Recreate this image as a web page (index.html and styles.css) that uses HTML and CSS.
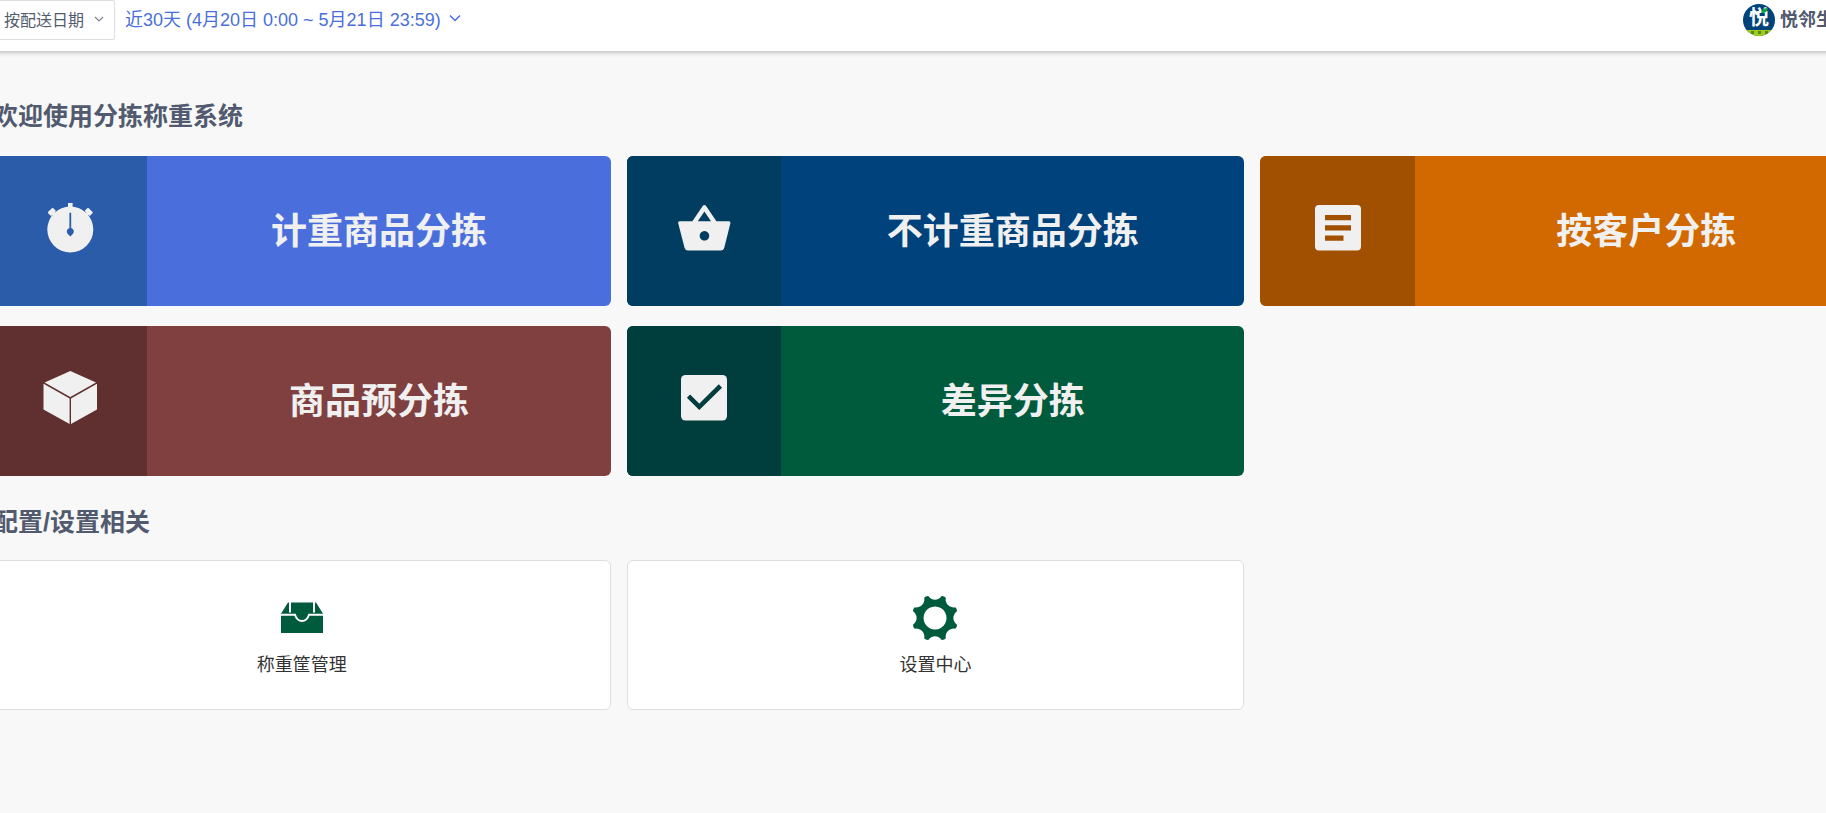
FILE: index.html
```html
<!DOCTYPE html>
<html lang="zh-CN">
<head>
    <meta charset="UTF-8">
    <meta name="viewport" content="width=device-width, initial-scale=1.0">
    <title>分拣称重系统</title>
    <link rel="stylesheet" href="styles.css">
</head>
<body>
    <header class="header">
        <div class="select-wrap">
            <select class="date-type" aria-label="日期类型">
                <option>按配送日期</option>
            </select>
            <svg class="select-arrow" width="10" height="6" viewBox="0 0 10 6"><path d="M1 1l4 4 4-4" fill="none" stroke="#7d8494" stroke-width="1.2"/></svg>
        </div>
        <button class="date-range" type="button">
            近30天 (4月20日 0:00 ~ 5月21日 23:59)
            <svg width="12" height="8" viewBox="0 0 12 8"><path d="M1 1.5l5 5 5-5" fill="none" stroke="currentColor" stroke-width="1.5"/></svg>
        </button>
        <div class="user">
            <svg class="avatar" width="32" height="32" viewBox="0 0 32 32">
                <clipPath id="round"><circle cx="16" cy="16" r="16"/></clipPath>
                <g clip-path="url(#round)">
                    <rect width="32" height="32" fill="#00427a"/>
                    <rect y="26" width="32" height="6" fill="#a4cc16"/>
                    <path d="M8 27h3v3H8zM15 27h3v3h-3zM22 27h3v3h-3z" fill="#4f8a1c"/>
                    <text class="avatar-text" x="16" y="21" text-anchor="middle">悦</text>
                    <path d="M18 9q1-5 7-5q-1 6-7 5z" fill="#13a04a"/>
                </g>
            </svg>
            <span class="user-name">悦邻生</span>
        </div>
    </header>

    <main class="main">
        <h2 class="title">欢迎使用分拣称重系统</h2>
        <div class="grid">
            <a href="#" class="card blue">
                <span class="card-icon">
                    <svg width="54" height="54" viewBox="0 0 54 54">
                        <g fill="#f0f0f0">
                            <circle cx="27.3" cy="28.5" r="23"/>
                            <rect x="25" y="2" width="4.6" height="6"/>
                            <rect x="-3.6" y="-2.5" width="7.2" height="5" rx="1" transform="translate(8.8 10.8) rotate(-45)"/>
                            <rect x="-1.6" y="0" width="3.2" height="6" transform="translate(8.8 10.8) rotate(-45)"/>
                            <rect x="-3.6" y="-2.5" width="7.2" height="5" rx="1" transform="translate(45.8 10.8) rotate(45)"/>
                            <rect x="-1.6" y="0" width="3.2" height="6" transform="translate(45.8 10.8) rotate(45)"/>
                        </g>
                        <path d="M26.4 11.7h1.8V27a3.6 3.6 0 0 1 1.6 6l-2.5 2.6-2.5-2.6a3.6 3.6 0 0 1 1.6-6z" fill="#2a5caa"/>
                    </svg>
                </span>
                <span class="card-text">计重商品分拣</span>
            </a>
            <a href="#" class="card navy">
                <span class="card-icon">
                    <svg width="54" height="54" viewBox="0 0 54 54">
                        <path fill="#f0f0f0" fill-rule="evenodd" d="M15.4 20.3L25.7 5q1.7-2 3.4 0l10.3 15.3H52q1.8.2 1.4 2l-6.2 24.6q-.8 2.6-3.4 2.6H11q-2.6 0-3.4-2.6L1.2 22.3q-.3-1.8 1.4-2zM20.8 20.3h13.2L27.4 10.5zM27.4 30a4.8 4.8 0 1 0 .1 0z"/>
                    </svg>
                </span>
                <span class="card-text">不计重商品分拣</span>
            </a>
            <a href="#" class="card orange">
                <span class="card-icon">
                    <svg width="54" height="54" viewBox="0 0 54 54">
                        <path fill="#f0f0f0" fill-rule="evenodd" d="M8 4h38a4 4 0 0 1 4 4v37.500a4 4 0 0 1-4 4H8a4 4 0 0 1-4-4V8a4 4 0 0 1 4-4zM14 14v5.200h26V14zM14 24.300v5.200h26v-5.200zM14 34.600v5.200h18.500v-5.200z"/>
                    </svg>
                </span>
                <span class="card-text">按客户分拣</span>
            </a>
            <a href="#" class="card red">
                <span class="card-icon">
                    <svg width="54" height="54" viewBox="0 0 54 54">
                        <path fill="#f0f0f0" d="M27.300 0L53 11.400 27.300 26 1.600 11.400zM.5 12.700L26.600 27.400V53L.5 38.500zM54 12.700L28 27.400V53l26-14.500z"/>
                    </svg>
                </span>
                <span class="card-text">商品预分拣</span>
            </a>
            <a href="#" class="card green">
                <span class="card-icon">
                    <svg width="54" height="54" viewBox="0 0 54 54">
                        <rect x="4" y="4" width="46" height="45.500" rx="4.500" fill="#f0f0f0"/>
                        <path d="M11.500 25.200l10.800 10.600L43.400 15" fill="none" stroke="#003d3d" stroke-width="4.600"/>
                    </svg>
                </span>
                <span class="card-text">差异分拣</span>
            </a>
        </div>

        <h2 class="title">配置/设置相关</h2>
        <div class="grid">
            <a href="#" class="config">
                <svg width="46" height="46" viewBox="0 0 46 46">
                    <path d="M9 7.500h28l7 11.200V38H2V18.700z" fill="#005a3c"/>
                    <path d="M11 6v11.500M35 6v11.500M1 19.700h15q2 6.200 7 6.200t7-6.200h15" fill="none" stroke="#fff" stroke-width="2"/>
                </svg>
                <span>称重筐管理</span>
            </a>
            <a href="#" class="config">
                <svg width="46" height="46" viewBox="0 0 46 46">
                    <path fill="#005a3c" fill-rule="evenodd" d="M16.300 1A8 8 0 0 0 29.700 1A5 5 0 0 1 33.800 2.700A8 8 0 0 0 43.300 12.200A5 5 0 0 1 45 16.300A8 8 0 0 0 45 29.700A5 5 0 0 1 43.300 33.800A8 8 0 0 0 33.800 43.300A5 5 0 0 1 29.700 45A8 8 0 0 0 16.300 45A5 5 0 0 1 12.200 43.300A8 8 0 0 0 2.700 33.800A5 5 0 0 1 1 29.700A8 8 0 0 0 1 16.300A5 5 0 0 1 2.700 12.200A8 8 0 0 0 12.200 2.700A5 5 0 0 1 16.300 1zM23 11.500a11.500 11.500 0 1 0 .1 0z"/>
                </svg>
                <span>设置中心</span>
            </a>
        </div>
    </main>
</body>
</html>
```
FILE: styles.css
```css
* {
    box-sizing: border-box;
    margin: 0;
    padding: 0;
}
body {
    font-family: "Liberation Sans", "Noto Sans CJK SC", sans-serif;
    background: #f8f8f8;
    color: #515a6e;
    min-height: 100vh;
    overflow-x: hidden;
}
a {
    color: inherit;
    text-decoration: none;
}

/* header and content are wider than the window on both sides */
.header, .main {
    margin: 0 -52px 0 -7px;
}
.header {
    display: flex;
    align-items: flex-start;
    padding: 0 44px 11px 0;
    background: #fff;
    box-shadow: 0 1px 5px rgba(0, 0, 0, 0.3);
}
.select-wrap {
    position: relative;
}
.date-type {
    appearance: none;
    display: block;
    height: 40px;
    padding: 0 29px 0 10px;
    border: 1px solid #dcdee2;
    border-radius: 2px;
    background: #fff;
    color: #515a6e;
    font-family: inherit;
    font-size: 16px;
}
.select-arrow {
    position: absolute;
    right: 11px;
    top: 16px;
}
.date-range {
    display: flex;
    align-items: center;
    gap: 8px;
    height: 36px;
    margin-left: 10px;
    border: none;
    background: none;
    color: #4a6fdc;
    font-family: inherit;
    font-size: 18px;
    cursor: pointer;
}
.user {
    display: flex;
    align-items: center;
    gap: 5px;
    height: 40px;
    margin-left: auto;
}
.avatar-text {
    fill: #fff;
    font-size: 20px;
    font-weight: 700;
}
.user-name {
    padding-bottom: 4px;
    font-size: 18px;
    font-weight: 700;
}

.title {
    padding: 46px 0 21px;
    font-size: 25px;
    line-height: 38px;
    font-weight: 700;
}
.grid {
    display: grid;
    grid-template-columns: repeat(3, 1fr);
    gap: 20px 16px;
}
.grid + .title {
    padding: 27px 0 19px;
}
.card {
    display: flex;
    height: 150px;
    border-radius: 6px;
    overflow: hidden;
    color: #f0f0f0;
}
.card-icon {
    display: flex;
    align-items: center;
    justify-content: center;
    width: 25%;
    padding-bottom: 6px;
}
.card-text {
    flex: 1;
    font-size: 36px;
    font-weight: 700;
    line-height: 152px;
    text-align: center;
}
.blue { background: #4a6fdc; }
.blue .card-icon { background: #2a5caa; }
.navy { background: #00427c; }
.navy .card-icon { background: #003d60; }
.orange { background: #d16900; }
.orange .card-icon { background: #a05000; }
.red { background: #804040; }
.red .card-icon { background: #603030; }
.green { background: #005a3c; }
.green .card-icon { background: #003d3d; }

.config {
    display: flex;
    flex-direction: column;
    align-items: center;
    gap: 11px;
    height: 150px;
    padding-top: 34px;
    border: 1px solid #dcdee2;
    border-radius: 6px;
    background: #fff;
    color: #333;
    font-size: 18px;
    line-height: 27px;
}
```
